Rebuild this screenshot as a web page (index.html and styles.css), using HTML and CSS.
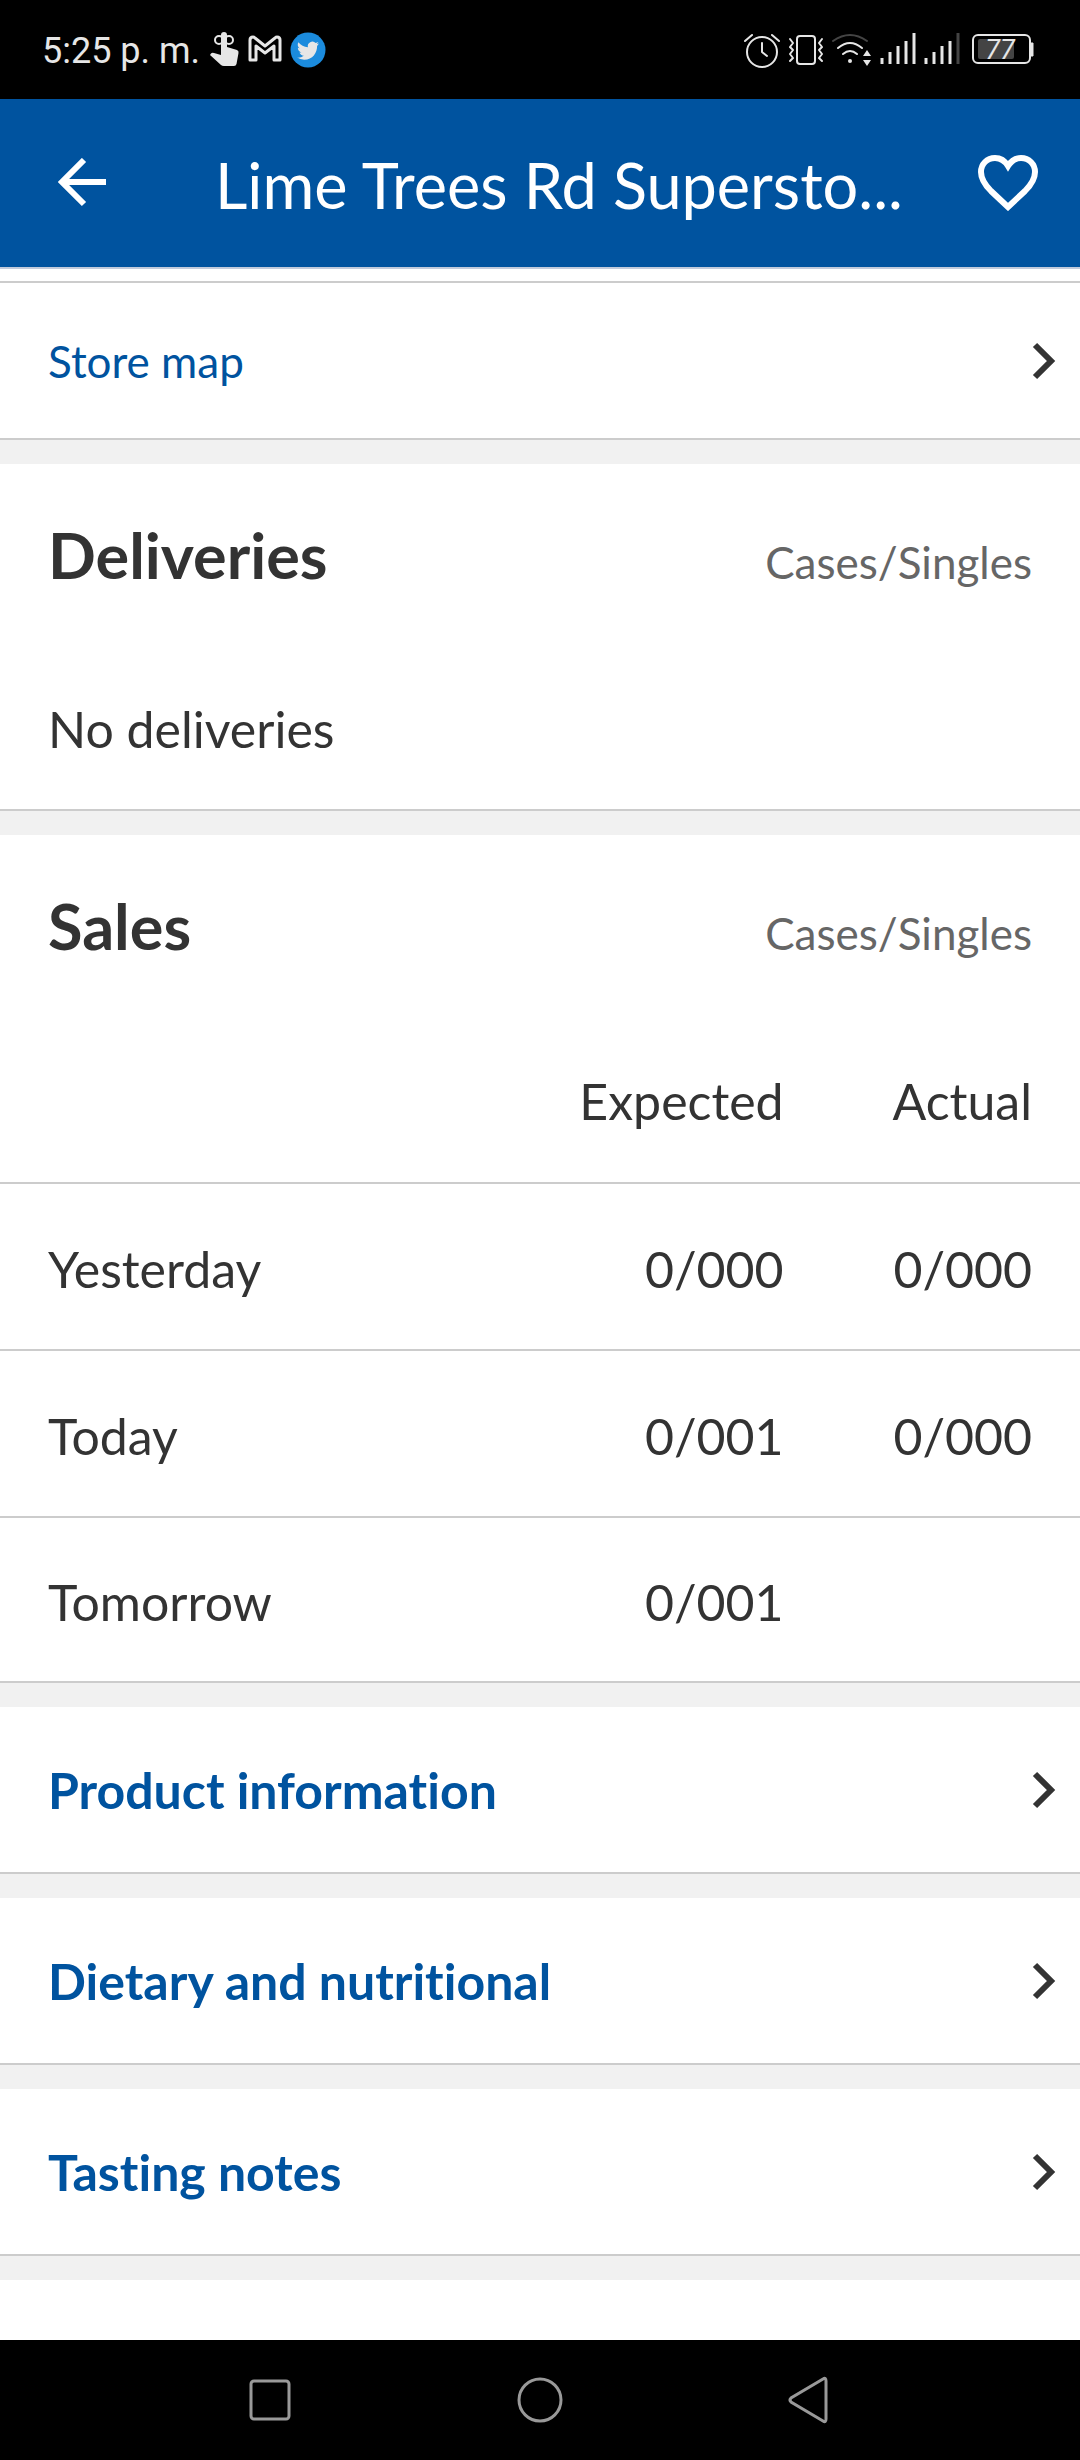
FILE: index.html
```html
<!DOCTYPE html>
<html lang="en">
<head>
    <meta charset="UTF-8">
    <meta name="viewport" content="width=device-width, initial-scale=1.0">
    <title>Lime Trees Rd Superstore</title>
    <link rel="stylesheet" href="styles.css">
</head>
<body>
    <!-- Status bar -->
    <div class="status-bar">
        <span class="clock">5:25 p. m.</span>
        <div class="status-left">
            <svg width="30" height="36" viewBox="0 0 30 36" fill="none">
                <circle cx="9" cy="8" r="4" stroke="#e6e6e6" stroke-width="2"/>
                <circle cx="19" cy="8" r="4" stroke="#e6e6e6" stroke-width="2"/>
                <path d="M11 3a3 3 0 0 1 6 0v12l10 3q2 1 1.500 3l-2 11q-.5 2-2.500 2H14q-2 0-3-1L0 23l1-1.500q1-1 3-.5l7 2z" fill="#e6e6e6"/>
            </svg>
            <svg width="34" height="36" viewBox="0 0 34 36" fill="none" stroke="#e6e6e6" stroke-width="3" stroke-linejoin="round">
                <path d="M2 28V8q0-3 3-3 1 0 2 1l10 8L27 6q1-1 2-1 3 0 3 3v20h-6V14l-9 7-9-7v14z"/>
            </svg>
            <svg width="36" height="36" viewBox="0 0 36 36">
                <circle cx="18" cy="18" r="17.500" fill="#1b8bdd"/>
                <path d="M29 11.500l-2.200.8 1.600-2.300-2.700 1a4.600 4.600 0 0 0-7.800 4.200c-4-.2-7-2-9.500-5-1.300 2.400-.6 4.800 1.400 6.200l-2-.6c0 2.200 1.500 4 3.700 4.600l-2 .1c.6 1.800 2.200 3.100 4.300 3.200A9.300 9.300 0 0 1 7 25.600a13.200 13.200 0 0 0 7.200 2.100c8.500 0 13-6.800 12.900-13.700z" fill="#e6e6e6"/>
            </svg>
        </div>
        <div class="status-right">
            <svg width="36" height="36" viewBox="0 0 36 36" fill="none" stroke="#e6e6e6" stroke-width="2" stroke-linecap="round" stroke-linejoin="round">
                <circle cx="18" cy="20" r="15"/>
                <path d="M18 11v9l5 4M1 9l7-6M35 9l-7-6"/>
            </svg>
            <svg width="36" height="36" viewBox="0 0 36 36" fill="none" stroke="#e6e6e6" stroke-width="2" stroke-linecap="round" stroke-linejoin="round">
                <rect x="9" y="4" width="18" height="28" rx="3"/>
                <path d="M2 7l3 4-3 4 3 3-3 4 3 4-3 3M34 7l-3 4 3 4-3 3 3 4-3 4 3 3"/>
            </svg>
            <svg width="40" height="36" viewBox="0 0 40 36" fill="none" stroke-width="2" stroke-linecap="round">
                <path d="M1 9q17-12 34 0" stroke="#444"/>
                <path d="M6 16q12-10 24 0M11 22q7-6 14 0" stroke="#e6e6e6"/>
                <circle cx="18" cy="29" r="2" fill="#e6e6e6"/>
                <path d="M35 18l4 6h-8zM35 34l4-6h-8z" fill="#e6e6e6"/>
            </svg>
            <svg width="36" height="36" viewBox="0 0 36 36" stroke="#e6e6e6" stroke-width="3">
                <path d="M2 26v6M10 20v12M18 14v18M26 9v23M34 1v31"/>
            </svg>
            <svg width="36" height="36" viewBox="0 0 36 36" stroke="#e6e6e6" stroke-width="3">
                <path d="M2 26v6M10 20v12M18 14v18M26 9v23"/>
                <path d="M34 1v31" stroke="#444"/>
            </svg>
            <svg class="battery" width="62" height="36" viewBox="0 0 62 36">
                <rect x="1" y="3" width="57" height="28" rx="5" fill="none" stroke="#e6e6e6" stroke-width="2"/>
                <path d="M59 11h2v13h-2z" fill="#e6e6e6" stroke="#e6e6e6"/>
                <rect x="6" y="7" width="36" height="20" rx="2" fill="#444"/>
                <text x="28" y="27" text-anchor="middle">77</text>
            </svg>
        </div>
    </div>

    <header>
        <button class="icon-btn" aria-label="Back">
            <svg width="50" height="50" viewBox="0 0 50 50" fill="none" stroke="#fff" stroke-width="6">
                <path d="M49 24H5M27 2L5 24l22 22"/>
            </svg>
        </button>
        <h1>Lime Trees Rd Supersto...</h1>
        <button class="icon-btn" aria-label="Add to favourites">
            <svg width="60" height="56" viewBox="0 0 60 56" fill="none" stroke="#fff" stroke-width="6">
                <path d="M30 52L13 36C6 29 3 24 3 17 3 9 9 3 17 3c5 0 10 3 13 8 3-5 8-8 13-8 8 0 14 6 14 14 0 7-3 12-10 19z"/>
            </svg>
        </button>
    </header>

    <main>
        <a class="link-row store-map" href="#">
            <span>Store map</span>
            <svg width="24" height="38" viewBox="0 0 24 38" fill="none" stroke="#333" stroke-width="6"><path d="M3 3l16 16L3 35"/></svg>
        </a>

        <section class="card">
            <div class="card-head">
                <h2>Deliveries</h2>
                <span class="unit">Cases/Singles</span>
            </div>
            <p class="empty">No deliveries</p>
        </section>

        <section class="card">
            <div class="card-head">
                <h2>Sales</h2>
                <span class="unit">Cases/Singles</span>
            </div>
            <table>
                <thead>
                    <tr>
                        <td></td>
                        <th scope="col">Expected</th>
                        <th scope="col">Actual</th>
                    </tr>
                </thead>
                <tbody>
                    <tr>
                        <th scope="row">Yesterday</th>
                        <td>0/000</td>
                        <td>0/000</td>
                    </tr>
                    <tr>
                        <th scope="row">Today</th>
                        <td>0/001</td>
                        <td>0/000</td>
                    </tr>
                    <tr>
                        <th scope="row">Tomorrow</th>
                        <td>0/001</td>
                        <td></td>
                    </tr>
                </tbody>
            </table>
        </section>

        <a class="link-row" href="#">
            <span>Product information</span>
            <svg width="24" height="38" viewBox="0 0 24 38" fill="none" stroke="#333" stroke-width="6"><path d="M3 3l16 16L3 35"/></svg>
        </a>
        <a class="link-row" href="#">
            <span>Dietary and nutritional</span>
            <svg width="24" height="38" viewBox="0 0 24 38" fill="none" stroke="#333" stroke-width="6"><path d="M3 3l16 16L3 35"/></svg>
        </a>
        <a class="link-row" href="#">
            <span>Tasting notes</span>
            <svg width="24" height="38" viewBox="0 0 24 38" fill="none" stroke="#333" stroke-width="6"><path d="M3 3l16 16L3 35"/></svg>
        </a>
        <div class="filler"></div>
    </main>

    <!-- Android navigation -->
    <nav class="nav-bar">
        <button aria-label="Recent apps">
            <svg width="48" height="48" viewBox="0 0 48 48"><rect x="5" y="5" width="38" height="38" rx="3"/></svg>
        </button>
        <button aria-label="Home">
            <svg width="48" height="48" viewBox="0 0 48 48"><circle cx="24" cy="24" r="21"/></svg>
        </button>
        <button aria-label="Back">
            <svg width="48" height="48" viewBox="0 0 48 48"><path d="M37 3Q40 1 40 5v38q0 4-3 2L5 26q-2-2 0-4z"/></svg>
        </button>
    </nav>
</body>
</html>
```
FILE: styles.css
```css
* {
    box-sizing: border-box;
}
body {
    margin: 0;
    min-height: 100vh;
    display: flex;
    flex-direction: column;
    font-family: Lato, 'Open Sans', sans-serif;
    font-size: 50px;
    line-height: 60px;
    font-variant-ligatures: none;
    background-color: #fff;
    color: #333;
}
svg {
    display: block;
    flex: none;
}
button {
    background: none;
    border: none;
    padding: 0;
    cursor: pointer;
}

/* Status bar */
.status-bar {
    height: 99px;
    padding: 0 46px 0 42px;
    display: flex;
    align-items: center;
    background: #000;
    color: #e6e6e6;
}
.clock {
    padding-top: 3px;
    font-family: Roboto, sans-serif;
    font-size: 36px;
    font-weight: 400;
    line-height: 44px;
}
.status-left {
    display: flex;
    gap: 8px;
    margin-left: 10px;
}
.status-right {
    display: flex;
    gap: 8px;
    margin-left: auto;
}
.battery {
    margin-left: 4px;
}
.battery text {
    font-family: Roboto, sans-serif;
    font-size: 27px;
    font-style: italic;
    fill: #e6e6e6;
}

/* App header */
header {
    height: 170px;
    padding: 0 42px 0 57px;
    display: flex;
    align-items: center;
    background: #00539f;
    color: #fff;
    border-bottom: 2px solid #c1cbdc;
}
h1 {
    flex: 1;
    margin: 0;
    padding: 4px 0 0 108px;
    font-size: 63px;
    font-weight: 400;
    line-height: 72px;
    white-space: nowrap;
}

/* Content */
main {
    flex: 1;
    border-top: 12px solid #fff;
    background: #f1f1f1;
}
.link-row {
    display: flex;
    align-items: center;
    justify-content: space-between;
    height: 167px;
    margin-bottom: 24px;
    padding: 0 24px 0 48px;
    background: #fff;
    border-bottom: 2px solid #ccc;
    color: #00539f;
    font-weight: 700;
    text-decoration: none;
}
.store-map {
    height: 159px;
    border-top: 2px solid #ccc;
    font-size: 44px;
    font-weight: 400;
}
.card {
    margin-bottom: 24px;
    background: #fff;
}
.card-head {
    display: flex;
    align-items: baseline;
    justify-content: space-between;
    height: 180px;
    padding: 55px 48px 0;
}
h2 {
    margin: 0;
    font-size: 63px;
    font-weight: 700;
    line-height: 72px;
}
.unit {
    font-size: 44px;
    color: #666;
}
.empty {
    margin: 0;
    padding: 55px 48px 50px;
    border-bottom: 2px solid #ccc;
}

/* Sales table */
table {
    width: 100%;
    border-spacing: 0;
}
th, td {
    height: 167px;
    padding: 4px 48px 0 0;
    border-bottom: 2px solid #ccc;
    font-weight: 400;
    text-align: right;
}
thead th {
    height: 169px;
}
tbody tr:last-child > * {
    height: 165px;
}
th:first-child {
    padding-left: 48px;
    text-align: left;
}
th:last-child, td:last-child {
    width: 23%;
}

.filler {
    height: 60px;
    background: #fff;
}

/* Navigation bar */
.nav-bar {
    display: grid;
    grid-template-columns: repeat(3, 1fr);
    justify-items: center;
    align-items: center;
    height: 120px;
    padding: 0 12.5%;
    background: #000;
}
.nav-bar svg {
    fill: none;
    stroke: #999;
    stroke-width: 3px;
}
```
